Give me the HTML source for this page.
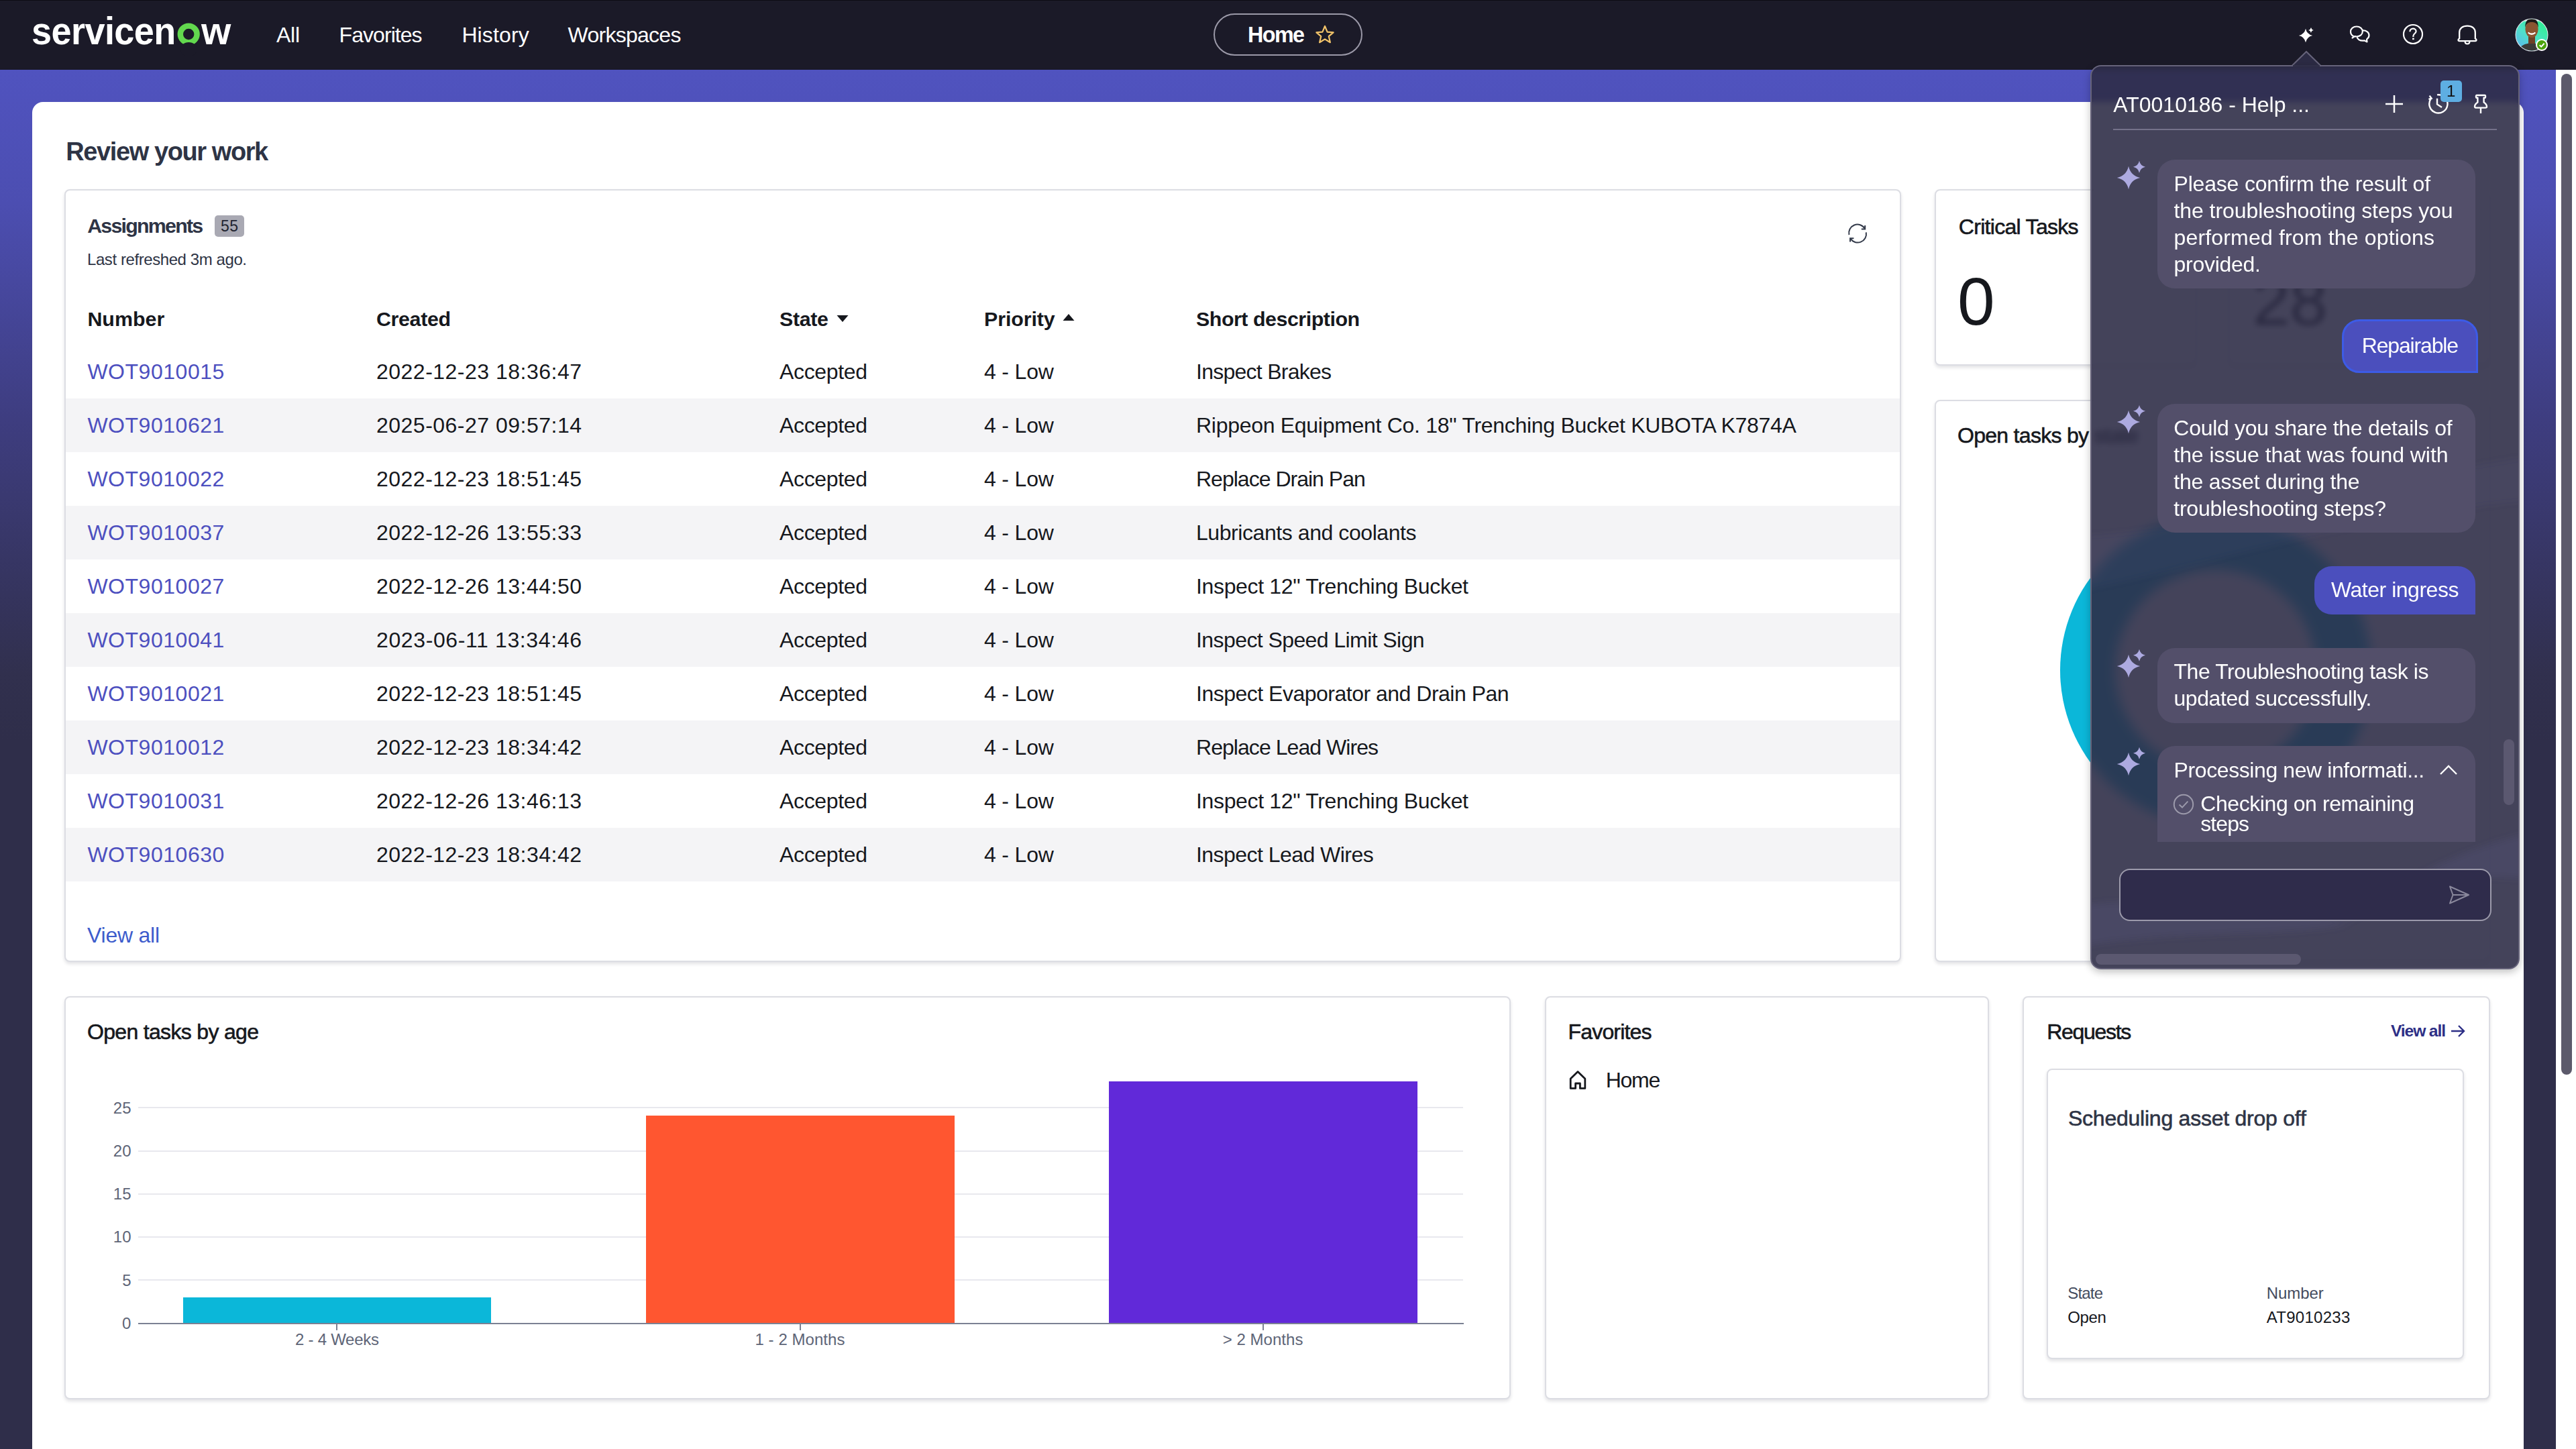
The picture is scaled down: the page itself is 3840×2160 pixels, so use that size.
<!DOCTYPE html><html><head><meta charset="utf-8"><style>
*{margin:0;padding:0;box-sizing:border-box}
html,body{width:3840px;height:2160px;overflow:hidden}
body{position:relative;background:#fff;font-family:"Liberation Sans",sans-serif;}
.t{position:absolute;white-space:nowrap}
svg{position:absolute;overflow:visible}
.card{position:absolute;background:#fff;border:2px solid #dcdde3;border-radius:8px;box-shadow:0 3px 5px rgba(20,20,40,0.12)}
.med{-webkit-text-stroke:0.7px currentColor}
</style></head><body>
<div style="position:absolute;left:0px;top:104px;width:3810px;height:2056px;background:linear-gradient(180deg,#5053bf 0px,#4c4eb1 200px,#3e3d80 520px,#31304e 900px,#2f2e4a 1000px,#2f2e4a 2056px)"></div>
<div style="position:absolute;left:3810px;top:104px;width:30px;height:2056px;background:#ffffff"></div>
<div style="position:absolute;left:0px;top:0px;width:3840px;height:104px;background:#1b1a28"></div>
<div style="position:absolute;left:0px;top:0px;width:3840px;height:1px;background:#0d0c14"></div>
<div style="position:absolute;left:48px;top:152px;width:3714px;height:2100px;background:#ffffff;border-radius:16px"></div>
<div class="t" style="left:47.0px;top:18.2px;font-size:57px;line-height:57px;color:#fff;font-weight:700;letter-spacing:-0.60px;transform:scaleX(0.948);transform-origin:0 0">servicen</div>
<div class="t" style="left:300.0px;top:18.2px;font-size:57.0px;line-height:57.0px;color:#fff;font-weight:700;">w</div>
<svg width="40" height="40" style="left:261px;top:32px" viewBox="261 32 40 40"><circle cx="281.2" cy="51" r="12.4" fill="none" stroke="#62d84e" stroke-width="8.4"/><ellipse cx="281.3" cy="73.5" rx="12.5" ry="10.6" fill="#1b1a28"/></svg>
<div class="t" style="left:412.0px;top:35.9px;font-size:32px;line-height:32px;color:#fff;letter-spacing:-0.28px;">All</div>
<div class="t" style="left:505.6px;top:35.9px;font-size:32px;line-height:32px;color:#fff;letter-spacing:-0.95px;">Favorites</div>
<div class="t" style="left:688.4px;top:35.9px;font-size:32px;line-height:32px;color:#fff;letter-spacing:0.12px;">History</div>
<div class="t" style="left:846.6px;top:35.9px;font-size:32px;line-height:32px;color:#fff;letter-spacing:-0.74px;">Workspaces</div>
<div style="position:absolute;left:1809px;top:20px;width:222px;height:63px;border:2px solid #9b99a8;border-radius:32px"></div>
<div class="t" style="left:1860.0px;top:36.1px;font-size:32.3px;line-height:32.3px;color:#fff;font-weight:700;letter-spacing:-1.58px;">Home</div>
<svg width="40" height="40" style="left:1955px;top:33px" viewBox="0 0 40 40"><path d="M20,6 L23.6,14.6 L32.6,15.3 L25.8,21.2 L27.9,30.2 L20,25.4 L12.1,30.2 L14.2,21.2 L7.4,15.3 L16.4,14.6 Z" fill="none" stroke="#f3c46a" stroke-width="2.2" stroke-linejoin="round"/></svg>
<svg width="60" height="60" style="left:3400px;top:22px" viewBox="3400 22 60 60"><path d="M3437,42.8 Q3438.836,51.164 3447.2,53 Q3438.836,54.836 3437,63.2 Q3435.164,54.836 3426.8,53 Q3435.164,51.164 3437,42.8 Z" fill="#fff"/><path d="M3445,41.1 Q3445.702,44.298 3448.9,45 Q3445.702,45.702 3445,48.9 Q3444.298,45.702 3441.1,45 Q3444.298,44.298 3445,41.1 Z" fill="#fff"/></svg>
<svg width="40" height="40" style="left:3500px;top:34px" viewBox="0 0 40 40"><path d="M9,20.5 C5.5,18.8 4,16 4,13.2 C4,8.6 8,5.5 13,5.5 C18,5.5 21.8,8.6 21.8,13 C21.8,17.5 18,20.5 13,20.5 C12,20.5 11,20.3 10.3,20.1 L6.5,22.5 Z" fill="none" stroke="#fff" stroke-width="2.2" stroke-linejoin="round"/><path d="M21.6,11.5 C27,11 31.5,14 31.5,18.6 C31.5,21.3 30,23.4 28,24.6 L28.5,28.5 L24.6,26.4 C23.8,26.6 23,26.7 22.3,26.7 C18,26.7 14.6,24.6 13.6,21.4" fill="none" stroke="#fff" stroke-width="2.2" stroke-linejoin="round"/></svg>
<svg width="40" height="40" style="left:3577px;top:31px" viewBox="0 0 40 40"><circle cx="20" cy="20" r="14" fill="none" stroke="#fff" stroke-width="2.2"/><path d="M15.4,16.2 C15.4,13.4 17.4,11.6 20,11.6 C22.6,11.6 24.6,13.4 24.6,15.8 C24.6,18.8 20.4,19.2 20.4,22.4 L20.4,24" fill="none" stroke="#fff" stroke-width="2.2"/><rect x="19.1" y="25.6" width="2.6" height="2.6" fill="#fff"/></svg>
<svg width="40" height="40" style="left:3658px;top:32px" viewBox="0 0 40 40"><path d="M8.2,25.5 L8.2,16.5 C8.2,10.3 13,6.6 20,6.6 C27,6.6 31.8,10.3 31.8,16.5 L31.8,25.5 C32.8,25.9 33.5,26.6 33.5,27.6 C33.5,28.6 32.8,29.2 31.8,29.2 L8.2,29.2 C7.2,29.2 6.5,28.6 6.5,27.6 C6.5,26.6 7.2,25.9 8.2,25.5 Z" fill="none" stroke="#fff" stroke-width="2.3" stroke-linejoin="round"/><path d="M16.6,29.4 C16.6,32 18,33.4 20,33.4 C22,33.4 23.4,32 23.4,29.4" fill="none" stroke="#fff" stroke-width="2.3"/></svg>
<svg width="56" height="56" style="left:3746px;top:24px" viewBox="0 0 56 56"><defs><linearGradient id="ag" x1="0.8" y1="0.1" x2="0.2" y2="0.9"><stop offset="0" stop-color="#2cf08c"/><stop offset="0.55" stop-color="#4fe0c8"/><stop offset="1" stop-color="#5ab8ee"/></linearGradient><clipPath id="ac"><circle cx="28" cy="28" r="23.5"/></clipPath></defs><circle cx="28" cy="28" r="24.5" fill="#e8e8ee"/><g clip-path="url(#ac)"><rect x="0" y="0" width="56" height="56" fill="url(#ag)"/><path d="M0,0 H56 V14 C46,6 38,8 28,8 C18,8 10,6 0,14 Z" fill="#e9eaf0"/><path d="M6,58 C7,46 15,41 28,40 C41,41 49,46 50,58 Z" fill="#3b3b39"/><rect x="23" y="29" width="10" height="12" fill="#6e4026"/><ellipse cx="28" cy="19.5" rx="9.6" ry="12.6" fill="#8a5431"/><path d="M18.2,17 C18,8 22,3.5 28,3.5 C34,3.5 38,8 37.8,17 C36.6,11.5 33.5,9 28,9 C22.5,9 19.4,11.5 18.2,17 Z" fill="#1e1a18"/><path d="M22.6,24.5 Q28,29 33.4,24.5" stroke="#fff" stroke-width="2.2" fill="none"/></g><circle cx="43" cy="43" r="9" fill="#fff"/><circle cx="43" cy="43" r="7" fill="#4ca30d"/><path d="M39.6,43.2 L42.2,45.6 L46.6,40.8" stroke="#fff" stroke-width="2" fill="none"/></svg>
<div class="t" style="left:98.3px;top:207.0px;font-size:38.0px;line-height:38.0px;color:#2e3445;font-weight:700;letter-spacing:-1.41px;">Review your work</div>
<div class="card" style="left:96px;top:282px;width:2738px;height:1152px"></div>
<div class="t" style="left:130.2px;top:321.3px;font-size:30.4px;line-height:30.4px;color:#2e3445;font-weight:700;letter-spacing:-1.78px;">Assignments</div>
<div style="position:absolute;left:320px;top:321px;width:44px;height:32px;background:#a9a9b3;border-radius:5px"></div>
<div class="t" style="left:329.0px;top:325.5px;font-size:23px;line-height:23px;color:#1f2430;letter-spacing:0.41px;">55</div>
<div class="t" style="left:130.0px;top:374.5px;font-size:24px;line-height:24px;color:#2e3445;letter-spacing:-0.42px;">Last refreshed 3m ago.</div>
<svg width="28" height="28" style="left:2755px;top:334px" viewBox="0 0 28 28" fill="none" stroke="#333a4a" stroke-width="2"><path d="M1.4,16 A12.8,12.8 0 0 1 24.8,6.6"/><path d="M19.8,7.4 L25.2,7.4 L25.2,2"/><path d="M26.8,12.4 A12.8,12.8 0 0 1 3.4,21.6"/><path d="M8.4,21.2 L3,21.2 L3,26.4"/></svg>
<div class="t" style="left:130.4px;top:459.8px;font-size:30.4px;line-height:30.4px;color:#16181d;font-weight:700;letter-spacing:0.03px;">Number</div>
<div class="t" style="left:561.0px;top:459.8px;font-size:30.4px;line-height:30.4px;color:#16181d;font-weight:700;letter-spacing:-0.36px;">Created</div>
<div class="t" style="left:1162.0px;top:459.8px;font-size:30.4px;line-height:30.4px;color:#16181d;font-weight:700;letter-spacing:-0.33px;">State</div>
<svg width="20" height="14" style="left:1246px;top:468px" viewBox="0 0 20 14"><path d="M1.5,2 L18.5,2 L10,12 Z" fill="#16181d"/></svg>
<div class="t" style="left:1467.0px;top:459.8px;font-size:30.4px;line-height:30.4px;color:#16181d;font-weight:700;letter-spacing:-0.11px;">Priority</div>
<svg width="20" height="14" style="left:1583px;top:466px" viewBox="0 0 20 14"><path d="M1.5,12 L18.5,12 L10,2 Z" fill="#16181d"/></svg>
<div class="t" style="left:1783.0px;top:459.8px;font-size:30.4px;line-height:30.4px;color:#16181d;font-weight:700;letter-spacing:-0.47px;">Short description</div>
<div class="t" style="left:130.4px;top:537.9px;font-size:32px;line-height:32px;color:#4d50bf;letter-spacing:0.53px;">WOT9010015</div>
<div class="t" style="left:561.0px;top:537.9px;font-size:32px;line-height:32px;color:#16181d;letter-spacing:0.49px;">2022-12-23 18:36:47</div>
<div class="t" style="left:1162.0px;top:537.9px;font-size:32px;line-height:32px;color:#16181d;letter-spacing:-0.35px;">Accepted</div>
<div class="t" style="left:1467.0px;top:537.9px;font-size:32px;line-height:32px;color:#16181d;letter-spacing:-0.16px;">4 - Low</div>
<div class="t" style="left:1783.0px;top:537.9px;font-size:32px;line-height:32px;color:#16181d;letter-spacing:-0.74px;">Inspect Brakes</div>
<div style="position:absolute;left:98px;top:594px;width:2734px;height:80px;background:#f4f4f6"></div>
<div class="t" style="left:130.4px;top:617.9px;font-size:32px;line-height:32px;color:#4d50bf;letter-spacing:0.53px;">WOT9010621</div>
<div class="t" style="left:561.0px;top:617.9px;font-size:32px;line-height:32px;color:#16181d;letter-spacing:0.49px;">2025-06-27 09:57:14</div>
<div class="t" style="left:1162.0px;top:617.9px;font-size:32px;line-height:32px;color:#16181d;letter-spacing:-0.35px;">Accepted</div>
<div class="t" style="left:1467.0px;top:617.9px;font-size:32px;line-height:32px;color:#16181d;letter-spacing:-0.16px;">4 - Low</div>
<div class="t" style="left:1783.0px;top:617.9px;font-size:32px;line-height:32px;color:#16181d;letter-spacing:-0.29px;">Rippeon Equipment Co. 18&quot; Trenching Bucket KUBOTA K7874A</div>
<div class="t" style="left:130.4px;top:697.9px;font-size:32px;line-height:32px;color:#4d50bf;letter-spacing:0.53px;">WOT9010022</div>
<div class="t" style="left:561.0px;top:697.9px;font-size:32px;line-height:32px;color:#16181d;letter-spacing:0.49px;">2022-12-23 18:51:45</div>
<div class="t" style="left:1162.0px;top:697.9px;font-size:32px;line-height:32px;color:#16181d;letter-spacing:-0.35px;">Accepted</div>
<div class="t" style="left:1467.0px;top:697.9px;font-size:32px;line-height:32px;color:#16181d;letter-spacing:-0.16px;">4 - Low</div>
<div class="t" style="left:1783.0px;top:697.9px;font-size:32px;line-height:32px;color:#16181d;letter-spacing:-0.99px;">Replace Drain Pan</div>
<div style="position:absolute;left:98px;top:754px;width:2734px;height:80px;background:#f4f4f6"></div>
<div class="t" style="left:130.4px;top:777.9px;font-size:32px;line-height:32px;color:#4d50bf;letter-spacing:0.53px;">WOT9010037</div>
<div class="t" style="left:561.0px;top:777.9px;font-size:32px;line-height:32px;color:#16181d;letter-spacing:0.49px;">2022-12-26 13:55:33</div>
<div class="t" style="left:1162.0px;top:777.9px;font-size:32px;line-height:32px;color:#16181d;letter-spacing:-0.35px;">Accepted</div>
<div class="t" style="left:1467.0px;top:777.9px;font-size:32px;line-height:32px;color:#16181d;letter-spacing:-0.16px;">4 - Low</div>
<div class="t" style="left:1783.0px;top:777.9px;font-size:32px;line-height:32px;color:#16181d;letter-spacing:-0.43px;">Lubricants and coolants</div>
<div class="t" style="left:130.4px;top:857.9px;font-size:32px;line-height:32px;color:#4d50bf;letter-spacing:0.53px;">WOT9010027</div>
<div class="t" style="left:561.0px;top:857.9px;font-size:32px;line-height:32px;color:#16181d;letter-spacing:0.49px;">2022-12-26 13:44:50</div>
<div class="t" style="left:1162.0px;top:857.9px;font-size:32px;line-height:32px;color:#16181d;letter-spacing:-0.35px;">Accepted</div>
<div class="t" style="left:1467.0px;top:857.9px;font-size:32px;line-height:32px;color:#16181d;letter-spacing:-0.16px;">4 - Low</div>
<div class="t" style="left:1783.0px;top:857.9px;font-size:32px;line-height:32px;color:#16181d;letter-spacing:-0.34px;">Inspect 12&quot; Trenching Bucket</div>
<div style="position:absolute;left:98px;top:914px;width:2734px;height:80px;background:#f4f4f6"></div>
<div class="t" style="left:130.4px;top:937.9px;font-size:32px;line-height:32px;color:#4d50bf;letter-spacing:0.53px;">WOT9010041</div>
<div class="t" style="left:561.0px;top:937.9px;font-size:32px;line-height:32px;color:#16181d;letter-spacing:0.62px;">2023-06-11 13:34:46</div>
<div class="t" style="left:1162.0px;top:937.9px;font-size:32px;line-height:32px;color:#16181d;letter-spacing:-0.35px;">Accepted</div>
<div class="t" style="left:1467.0px;top:937.9px;font-size:32px;line-height:32px;color:#16181d;letter-spacing:-0.16px;">4 - Low</div>
<div class="t" style="left:1783.0px;top:937.9px;font-size:32px;line-height:32px;color:#16181d;letter-spacing:-0.58px;">Inspect Speed Limit Sign</div>
<div class="t" style="left:130.4px;top:1017.9px;font-size:32px;line-height:32px;color:#4d50bf;letter-spacing:0.53px;">WOT9010021</div>
<div class="t" style="left:561.0px;top:1017.9px;font-size:32px;line-height:32px;color:#16181d;letter-spacing:0.49px;">2022-12-23 18:51:45</div>
<div class="t" style="left:1162.0px;top:1017.9px;font-size:32px;line-height:32px;color:#16181d;letter-spacing:-0.35px;">Accepted</div>
<div class="t" style="left:1467.0px;top:1017.9px;font-size:32px;line-height:32px;color:#16181d;letter-spacing:-0.16px;">4 - Low</div>
<div class="t" style="left:1783.0px;top:1017.9px;font-size:32px;line-height:32px;color:#16181d;letter-spacing:-0.50px;">Inspect Evaporator and Drain Pan</div>
<div style="position:absolute;left:98px;top:1074px;width:2734px;height:80px;background:#f4f4f6"></div>
<div class="t" style="left:130.4px;top:1097.9px;font-size:32px;line-height:32px;color:#4d50bf;letter-spacing:0.53px;">WOT9010012</div>
<div class="t" style="left:561.0px;top:1097.9px;font-size:32px;line-height:32px;color:#16181d;letter-spacing:0.49px;">2022-12-23 18:34:42</div>
<div class="t" style="left:1162.0px;top:1097.9px;font-size:32px;line-height:32px;color:#16181d;letter-spacing:-0.35px;">Accepted</div>
<div class="t" style="left:1467.0px;top:1097.9px;font-size:32px;line-height:32px;color:#16181d;letter-spacing:-0.16px;">4 - Low</div>
<div class="t" style="left:1783.0px;top:1097.9px;font-size:32px;line-height:32px;color:#16181d;letter-spacing:-0.95px;">Replace Lead Wires</div>
<div class="t" style="left:130.4px;top:1177.9px;font-size:32px;line-height:32px;color:#4d50bf;letter-spacing:0.53px;">WOT9010031</div>
<div class="t" style="left:561.0px;top:1177.9px;font-size:32px;line-height:32px;color:#16181d;letter-spacing:0.49px;">2022-12-26 13:46:13</div>
<div class="t" style="left:1162.0px;top:1177.9px;font-size:32px;line-height:32px;color:#16181d;letter-spacing:-0.35px;">Accepted</div>
<div class="t" style="left:1467.0px;top:1177.9px;font-size:32px;line-height:32px;color:#16181d;letter-spacing:-0.16px;">4 - Low</div>
<div class="t" style="left:1783.0px;top:1177.9px;font-size:32px;line-height:32px;color:#16181d;letter-spacing:-0.34px;">Inspect 12&quot; Trenching Bucket</div>
<div style="position:absolute;left:98px;top:1234px;width:2734px;height:80px;background:#f4f4f6"></div>
<div class="t" style="left:130.4px;top:1257.9px;font-size:32px;line-height:32px;color:#4d50bf;letter-spacing:0.53px;">WOT9010630</div>
<div class="t" style="left:561.0px;top:1257.9px;font-size:32px;line-height:32px;color:#16181d;letter-spacing:0.49px;">2022-12-23 18:34:42</div>
<div class="t" style="left:1162.0px;top:1257.9px;font-size:32px;line-height:32px;color:#16181d;letter-spacing:-0.35px;">Accepted</div>
<div class="t" style="left:1467.0px;top:1257.9px;font-size:32px;line-height:32px;color:#16181d;letter-spacing:-0.16px;">4 - Low</div>
<div class="t" style="left:1783.0px;top:1257.9px;font-size:32px;line-height:32px;color:#16181d;letter-spacing:-0.54px;">Inspect Lead Wires</div>
<div class="t" style="left:130.0px;top:1377.7px;font-size:32px;line-height:32px;color:#3d5ccc;letter-spacing:-0.24px;">View all</div>
<div class="card" style="left:2884px;top:282px;width:390px;height:263px"></div>
<div class="t" style="left:2919.8px;top:321.9px;font-size:32px;line-height:32px;color:#16181d;letter-spacing:-0.70px;-webkit-text-stroke:0.6px currentColor">Critical Tasks</div>
<div class="t" style="left:2918.0px;top:399.3px;font-size:100px;line-height:100px;color:#16181d;">0</div>
<div class="card" style="left:3322px;top:282px;width:390px;height:263px"></div>
<div class="t" style="left:3358.0px;top:321.9px;font-size:32px;line-height:32px;color:#16181d;letter-spacing:-1.90px;-webkit-text-stroke:0.6px currentColor">Overdue Tasks</div>
<div class="t" style="left:3358.0px;top:399.3px;font-size:100px;line-height:100px;color:#16181d;">28</div>
<div class="card" style="left:2884px;top:596px;width:828px;height:838px"></div>
<div class="t" style="left:2918.0px;top:632.5px;font-size:32px;line-height:32px;color:#16181d;letter-spacing:-0.71px;-webkit-text-stroke:0.6px currentColor">Open tasks by state</div>
<div style="position:absolute;left:3071px;top:767px;width:464px;height:464px;border-radius:50%;background:#0bb7d9"></div>
<div style="position:absolute;left:3153px;top:849px;width:300px;height:300px;border-radius:50%;background:#fff"></div>
<div style="position:absolute;left:3118px;top:720px;width:592px;height:560px;background:#fff;overflow:hidden"><div style="position:absolute;left:0;top:0;width:592px;height:560px;filter:blur(8px)"><div style="position:absolute;left:-47px;top:47px;width:464px;height:464px;border-radius:50%;background:#0bb7d9"></div><div style="position:absolute;left:35px;top:129px;width:300px;height:300px;border-radius:50%;background:#fff"></div></div></div>
<div class="card" style="left:96px;top:1485px;width:2156px;height:601px"></div>
<div class="t" style="left:130.0px;top:1521.9px;font-size:32px;line-height:32px;color:#16181d;letter-spacing:-0.68px;-webkit-text-stroke:0.6px currentColor">Open tasks by age</div>
<div style="position:absolute;left:206px;top:1650px;width:1975px;height:2px;background:#e8e8ee"></div>
<div class="t" style="left:168.8px;top:1639.6px;font-size:24px;line-height:24px;color:#5e6577;">25</div>
<div style="position:absolute;left:206px;top:1715px;width:1975px;height:2px;background:#e8e8ee"></div>
<div class="t" style="left:168.8px;top:1703.8px;font-size:24px;line-height:24px;color:#5e6577;">20</div>
<div style="position:absolute;left:206px;top:1779px;width:1975px;height:2px;background:#e8e8ee"></div>
<div class="t" style="left:168.8px;top:1768.1px;font-size:24px;line-height:24px;color:#5e6577;">15</div>
<div style="position:absolute;left:206px;top:1843px;width:1975px;height:2px;background:#e8e8ee"></div>
<div class="t" style="left:168.8px;top:1832.3px;font-size:24px;line-height:24px;color:#5e6577;">10</div>
<div style="position:absolute;left:206px;top:1907px;width:1975px;height:2px;background:#e8e8ee"></div>
<div class="t" style="left:182.2px;top:1896.5px;font-size:24px;line-height:24px;color:#5e6577;">5</div>
<div class="t" style="left:182.0px;top:1960.8px;font-size:24px;line-height:24px;color:#5e6577;">0</div>
<div style="position:absolute;left:273px;top:1934px;width:459px;height:39px;background:#0bb7d9"></div>
<div style="position:absolute;left:963px;top:1663px;width:460px;height:310px;background:#ff5630"></div>
<div style="position:absolute;left:1653px;top:1612px;width:460px;height:361px;background:#6129d9"></div>
<div style="position:absolute;left:206px;top:1972px;width:1976px;height:2px;background:#7b8193"></div>
<div style="position:absolute;left:501px;top:1973px;width:2px;height:10px;background:#7b8193"></div>
<div style="position:absolute;left:1192px;top:1973px;width:2px;height:10px;background:#7b8193"></div>
<div style="position:absolute;left:1882px;top:1973px;width:2px;height:10px;background:#7b8193"></div>
<div class="t" style="left:440.0px;top:1985.2px;font-size:24px;line-height:24px;color:#5e6577;letter-spacing:-0.26px;">2 - 4 Weeks</div>
<div class="t" style="left:1125.5px;top:1985.2px;font-size:24px;line-height:24px;color:#5e6577;letter-spacing:0.05px;">1 - 2 Months</div>
<div class="t" style="left:1822.8px;top:1985.2px;font-size:24px;line-height:24px;color:#5e6577;letter-spacing:0.02px;">&gt; 2 Months</div>
<div class="card" style="left:2303px;top:1485px;width:662px;height:601px"></div>
<div class="t" style="left:2337.5px;top:1522.1px;font-size:32px;line-height:32px;color:#16181d;letter-spacing:-0.82px;-webkit-text-stroke:0.6px currentColor">Favorites</div>
<svg width="30" height="32" style="left:2337px;top:1594px" viewBox="0 0 30 32" fill="none" stroke="#16181d" stroke-width="2.8" stroke-linejoin="round"><path d="M4.2,28.4 L4.2,14 L15,3.4 L25.8,14 L25.8,28.4 L18.4,28.4 L18.4,21 L11.6,21 L11.6,28.4 Z"/></svg>
<div class="t" style="left:2393.7px;top:1593.7px;font-size:32px;line-height:32px;color:#16181d;letter-spacing:-1.25px;">Home</div>
<div class="card" style="left:3015px;top:1485px;width:697px;height:601px"></div>
<div class="t" style="left:3051.3px;top:1521.9px;font-size:32px;line-height:32px;color:#16181d;letter-spacing:-1.31px;-webkit-text-stroke:0.6px currentColor">Requests</div>
<div class="t" style="left:3564.0px;top:1525.1px;font-size:24.7px;line-height:24.7px;color:#2d2f86;font-weight:700;letter-spacing:-1.16px;">View all</div>
<svg width="24" height="22" style="left:3652px;top:1526px" viewBox="0 0 24 22" fill="none" stroke="#2d2f86" stroke-width="2.4"><path d="M2,11 L21,11 M13,3 L21,11 L13,19"/></svg>
<div class="card" style="left:3051px;top:1593px;width:622px;height:433px"></div>
<div class="t" style="left:3083.0px;top:1651.4px;font-size:32px;line-height:32px;color:#2e3445;letter-spacing:-0.24px;-webkit-text-stroke:0.6px currentColor">Scheduling asset drop off</div>
<div class="t" style="left:3082.2px;top:1915.7px;font-size:24px;line-height:24px;color:#454c5e;letter-spacing:-0.81px;">State</div>
<div class="t" style="left:3082.2px;top:1951.7px;font-size:24px;line-height:24px;color:#16181d;letter-spacing:-0.37px;">Open</div>
<div class="t" style="left:3378.7px;top:1915.7px;font-size:24px;line-height:24px;color:#454c5e;letter-spacing:-0.07px;">Number</div>
<div class="t" style="left:3378.7px;top:1951.7px;font-size:24px;line-height:24px;color:#16181d;letter-spacing:0.29px;">AT9010233</div>
<div style="position:absolute;left:3818px;top:110px;width:16px;height:1492px;background:#5c5a6b;border-radius:8px"></div>
<svg width="44" height="24" style="left:3416px;top:75px" viewBox="3416 75 44 24"><path d="M3417,97.5 L3438,77 L3459,97.5" fill="rgba(45,44,70,0.95)" stroke="#66637a" stroke-width="2"/></svg>
<div style="position:absolute;left:3116px;top:97px;width:640px;height:1348px;border-radius:16px;border:2px solid #66637a;background:rgba(45,44,70,0.89);backdrop-filter:blur(5px);-webkit-backdrop-filter:blur(5px);box-shadow:0 4px 12px rgba(0,0,0,0.25)"></div>
<div style="position:absolute;left:3418px;top:97px;width:40px;height:3px;background:rgba(45,44,70,0.95)"></div>
<svg width="636" height="1344" style="left:3118px;top:99px" viewBox="3118 99 636 1344"><defs><clipPath id="pc"><rect x="3118" y="99" width="636" height="1344" rx="14"/></clipPath><filter id="wb" x="-20%" y="-20%" width="140%" height="140%"><feGaussianBlur stdDeviation="6"/></filter></defs><g clip-path="url(#pc)" filter="url(#wb)"><path d="M3100,880 C3300,840 3500,770 3780,745 L3780,680 C3500,720 3300,790 3100,800 Z" fill="rgba(160,150,230,0.04)"/><path d="M3100,1350 C3250,1334 3400,1345 3490,1374 C3560,1330 3650,1268 3780,1240 L3780,1312 C3650,1292 3560,1338 3490,1380 C3400,1396 3250,1386 3100,1410 Z" fill="rgba(140,140,235,0.07)"/></g></svg>
<div class="t" style="left:3150.3px;top:139.8px;font-size:32px;line-height:32px;color:#ffffff;letter-spacing:-0.01px;">AT0010186 - Help ...</div>
<svg width="30" height="30" style="left:3554px;top:140px" viewBox="0 0 30 30" stroke="#fff" stroke-width="2.5"><path d="M15,2 V28 M2,15 H28"/></svg>
<svg width="40" height="40" style="left:3613px;top:135px" viewBox="0 0 40 40" fill="none" stroke="#fff" stroke-width="2.4"><path d="M10.8,12 A13.6,13.6 0 1 0 20,6.4"/><path d="M8.6,7.6 L11.6,11.6 L7.4,13"/><path d="M20,11.8 L20,20.4 L27,25"/></svg>
<div style="position:absolute;left:3638px;top:120px;width:32px;height:32px;background:#5eaee2;border-radius:5px"></div>
<div class="t" style="left:3647.0px;top:123.7px;font-size:24px;line-height:24px;color:#111;">1</div>
<svg width="24" height="32" style="left:3686px;top:139px" viewBox="0 0 24 32" fill="none" stroke="#fff" stroke-width="2.4" stroke-linejoin="round"><path d="M6,3 L18,3 C19.4,3 19.4,6.8 18,6.8 L16.6,6.8 L16.6,13.6 C19.6,15.6 21,17.6 21,20 C21,21.2 20,21.6 19,21.6 L5,21.6 C4,21.6 3,21.2 3,20 C3,17.6 4.4,15.6 7.4,13.6 L7.4,6.8 L6,6.8 C4.6,6.8 4.6,3 6,3 Z"/><path d="M12,21.6 L12,30"/></svg>
<div style="position:absolute;left:3150px;top:192px;width:572px;height:2px;background:#75728a"></div>
<div style="position:absolute;left:3216px;top:238px;width:474px;height:192px;background:#534f6a;border-radius:26px"></div>
<svg width="60" height="60" style="left:3150px;top:223px" viewBox="3150 223 60 60"><path d="M3173,247.8 Q3176.096,261.904 3190.2,265 Q3176.096,268.096 3173,282.2 Q3169.904,268.096 3155.8,265 Q3169.904,261.904 3173,247.8 Z" fill="#adaae0"/><path d="M3189,239.8 Q3190.62,247.18 3198,248.8 Q3190.62,250.42000000000002 3189,257.8 Q3187.38,250.42000000000002 3180,248.8 Q3187.38,247.18 3189,239.8 Z" fill="#adaae0"/></svg>
<div class="t" style="left:3240.5px;top:257.6px;font-size:32px;line-height:32px;color:#ffffff;letter-spacing:-0.19px;">Please confirm the result of</div>
<div class="t" style="left:3240.5px;top:297.6px;font-size:32px;line-height:32px;color:#ffffff;letter-spacing:-0.07px;">the troubleshooting steps you</div>
<div class="t" style="left:3240.5px;top:337.6px;font-size:32px;line-height:32px;color:#ffffff;letter-spacing:0.17px;">performed from the options</div>
<div class="t" style="left:3240.5px;top:377.6px;font-size:32px;line-height:32px;color:#ffffff;letter-spacing:-0.27px;">provided.</div>
<div style="position:absolute;left:3491px;top:476px;width:203px;height:80px;background:#4b4fbd;border:3px solid #3d5be6;border-radius:26px 26px 0 26px"></div>
<div class="t" style="left:3520.8px;top:499.3px;font-size:32px;line-height:32px;color:#ffffff;letter-spacing:-1.17px;">Repairable</div>
<div style="position:absolute;left:3216px;top:602px;width:474px;height:192px;background:#534f6a;border-radius:26px"></div>
<svg width="60" height="60" style="left:3150px;top:587px" viewBox="3150 587 60 60"><path d="M3173,611.8 Q3176.096,625.904 3190.2,629 Q3176.096,632.096 3173,646.2 Q3169.904,632.096 3155.8,629 Q3169.904,625.904 3173,611.8 Z" fill="#adaae0"/><path d="M3189,603.8 Q3190.62,611.18 3198,612.8 Q3190.62,614.42 3189,621.8 Q3187.38,614.42 3180,612.8 Q3187.38,611.18 3189,603.8 Z" fill="#adaae0"/></svg>
<div class="t" style="left:3240.3px;top:621.6px;font-size:32px;line-height:32px;color:#ffffff;letter-spacing:-0.28px;">Could you share the details of</div>
<div class="t" style="left:3240.3px;top:661.6px;font-size:32px;line-height:32px;color:#ffffff;letter-spacing:-0.06px;">the issue that was found with</div>
<div class="t" style="left:3240.3px;top:701.6px;font-size:32px;line-height:32px;color:#ffffff;letter-spacing:-0.20px;">the asset during the</div>
<div class="t" style="left:3240.3px;top:741.6px;font-size:32px;line-height:32px;color:#ffffff;letter-spacing:-0.25px;">troubleshooting steps?</div>
<div style="position:absolute;left:3450px;top:844px;width:240px;height:72px;background:#4b4fbd;border-radius:26px 26px 0 26px"></div>
<div class="t" style="left:3475.0px;top:863.3px;font-size:32px;line-height:32px;color:#ffffff;letter-spacing:-0.48px;">Water ingress</div>
<div style="position:absolute;left:3216px;top:966px;width:474px;height:112px;background:#534f6a;border-radius:26px"></div>
<svg width="60" height="60" style="left:3150px;top:951px" viewBox="3150 951 60 60"><path d="M3173,975.8 Q3176.096,989.904 3190.2,993 Q3176.096,996.096 3173,1010.2 Q3169.904,996.096 3155.8,993 Q3169.904,989.904 3173,975.8 Z" fill="#adaae0"/><path d="M3189,967.8 Q3190.62,975.18 3198,976.8 Q3190.62,978.42 3189,985.8 Q3187.38,978.42 3180,976.8 Q3187.38,975.18 3189,967.8 Z" fill="#adaae0"/></svg>
<div class="t" style="left:3240.5px;top:985.3px;font-size:32px;line-height:32px;color:#ffffff;letter-spacing:-0.44px;">The Troubleshooting task is</div>
<div class="t" style="left:3240.5px;top:1025.3px;font-size:32px;line-height:32px;color:#ffffff;letter-spacing:-0.43px;">updated successfully.</div>
<div style="position:absolute;left:3216px;top:1112px;width:474px;height:143px;background:#534f6a;border-radius:26px 26px 0 0"></div>
<svg width="60" height="60" style="left:3150px;top:1097px" viewBox="3150 1097 60 60"><path d="M3173,1121.8 Q3176.096,1135.904 3190.2,1139 Q3176.096,1142.096 3173,1156.2 Q3169.904,1142.096 3155.8,1139 Q3169.904,1135.904 3173,1121.8 Z" fill="#adaae0"/><path d="M3189,1113.8 Q3190.62,1121.18 3198,1122.8 Q3190.62,1124.4199999999998 3189,1131.8 Q3187.38,1124.4199999999998 3180,1122.8 Q3187.38,1121.18 3189,1113.8 Z" fill="#adaae0"/></svg>
<div class="t" style="left:3240.6px;top:1131.6px;font-size:32px;line-height:32px;color:#ffffff;letter-spacing:-0.41px;">Processing new informati...</div>
<svg width="30" height="20" style="left:3635px;top:1138px" viewBox="0 0 30 20" fill="none" stroke="#fff" stroke-width="2.4"><path d="M3,16 L15,4 L27,16"/></svg>
<svg width="34" height="34" style="left:3238px;top:1182px" viewBox="0 0 34 34" fill="none" stroke="#9c9aab" stroke-width="2"><circle cx="17" cy="17" r="14.2"/><path d="M10.6,17.6 L15,21.6 L23.4,12.6"/></svg>
<div class="t" style="left:3280.3px;top:1182.4px;font-size:32px;line-height:32px;color:#ffffff;letter-spacing:-0.43px;">Checking on remaining</div>
<div class="t" style="left:3280.3px;top:1211.6px;font-size:32px;line-height:32px;color:#ffffff;letter-spacing:-0.95px;">steps</div>
<div style="position:absolute;left:3732px;top:1102px;width:16px;height:98px;background:#5b5870;border-radius:8px"></div>
<div style="position:absolute;left:3159px;top:1295px;width:555px;height:78px;background:#2f2c4b;border:2px solid #9c9aab;border-radius:16px"></div>
<svg width="34" height="30" style="left:3649px;top:1319px" viewBox="0 0 34 30" fill="none" stroke="#8a889c" stroke-width="2" stroke-linejoin="round"><path d="M3,2.5 L31,15 L3,27.5 L7.5,15 Z M7.5,15 L31,15"/></svg>
<div style="position:absolute;left:3124px;top:1422px;width:306px;height:16px;background:#5b5870;border-radius:8px"></div>
</body></html>
